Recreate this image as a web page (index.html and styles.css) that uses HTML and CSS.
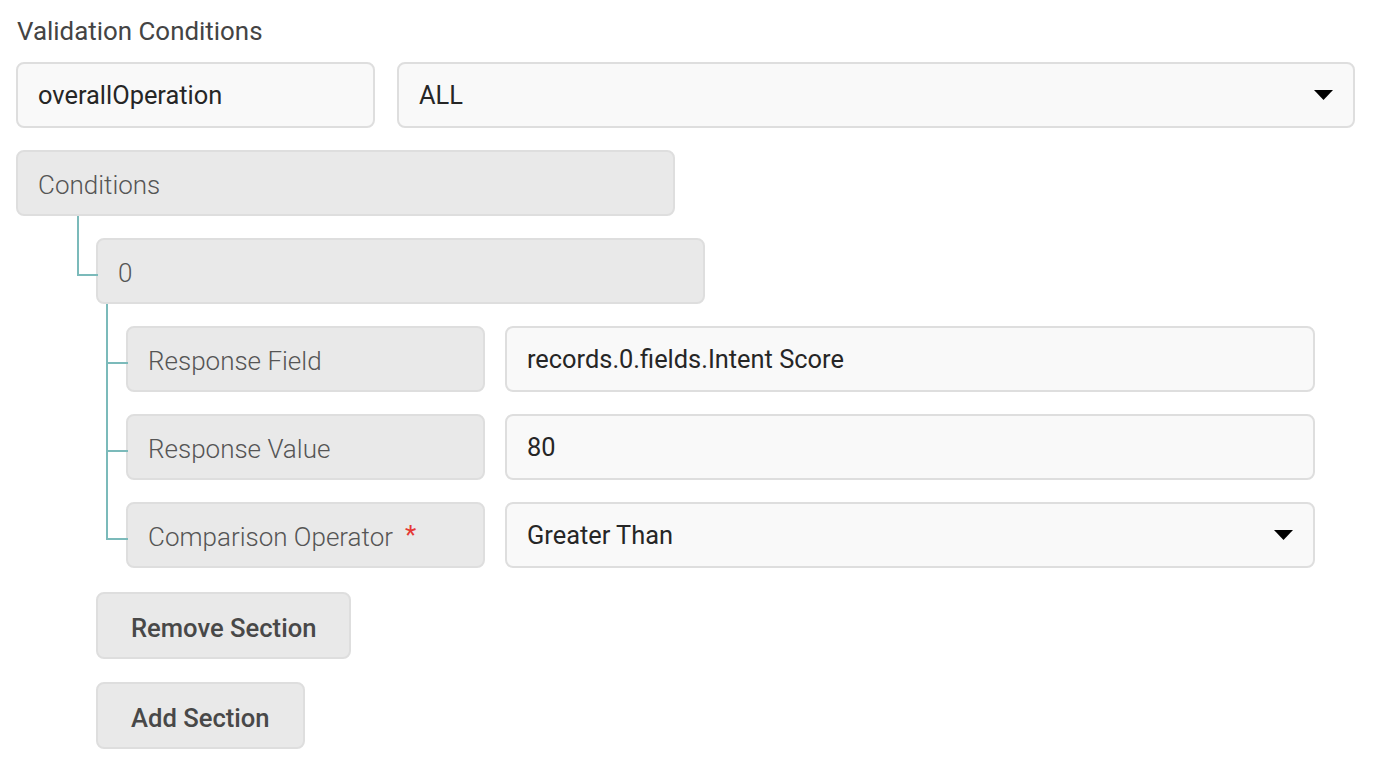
FILE: index.html
```html
<!DOCTYPE html>
<html>
<head>
<meta charset="utf-8">
<link rel="stylesheet" href="styles.css">
</head>
<body>
<div class="page">
  <div class="title">Validation Conditions</div>
  <div class="row">
    <div class="box input key-wide">overallOperation</div>
    <div class="box input select fill">ALL<svg class="caret" viewBox="0 0 19 10" width="19" height="10"><polygon points="0,0 19,0 9.5,10" fill="#000"/></svg></div>
  </div>
  <div class="group">
    <div class="box header w-cond">Conditions</div>
    <div class="children lvl1">
      <div class="node">
        <div class="box header w-zero">0</div>
        <div class="children lvl2">
          <div class="row branch">
            <div class="box header label">Response Field</div>
            <div class="box input value">records.0.fields.Intent Score</div>
          </div>
          <div class="row branch">
            <div class="box header label">Response Value</div>
            <div class="box input value">80</div>
          </div>
          <div class="row branch">
            <div class="box header label">Comparison Operator<span class="req">*</span></div>
            <div class="box input value select">Greater Than<svg class="caret" viewBox="0 0 19 10" width="19" height="10"><polygon points="0,0 19,0 9.5,10" fill="#000"/></svg></div>
          </div>
        </div>
      </div>
      <div class="actions">
        <button class="btn">Remove Section</button>
        <button class="btn">Add Section</button>
      </div>
    </div>
  </div>
</div>
</body>
</html>
```

FILE: styles.css
```css
* { box-sizing: border-box; }
html, body { margin: 0; padding: 0; background: #fff; }
body {
  font-family: Roboto, "Liberation Sans", sans-serif;
  font-size: 25.4px;
  color: #222;
}
.page {
  padding: 16px 0 0 16px;
  width: 1380px;
}
.title {
  color: #444;
  font-size: 25.9px;
  line-height: 30px;
  margin-bottom: 16px;
  padding-left: 1px;
}
.row {
  display: flex;
  gap: 22px;
  margin-bottom: 22px;
}
.box {
  height: 66px;
  border: 2px solid #dedede;
  border-radius: 8px;
  display: flex;
  align-items: center;
  padding: 0 20px;
  white-space: nowrap;
}
.input {
  background: #f9f9f9;
  color: #262626;
}
.header {
  background: #e9e9e9;
  color: #555;
  font-weight: 300;
  font-size: 26px;
  padding-top: 4px;
}
.key-wide { width: 359px; }
.fill { width: 958px; }
.select { justify-content: space-between; padding-right: 20px; }
.caret { display: block; }
.w-cond { width: 659px; margin-bottom: 22px; }
.w-zero { width: 609px; margin-bottom: 22px; }
.children { position: relative; }
.lvl1 { margin-left: 80px; }
.lvl2 { margin-left: 30px; }
.node { position: relative; }
.node::before {
  content: "";
  position: absolute;
  left: -19px;
  top: -22px;
  width: 19px;
  height: 58px;
  border-left: 2px solid #7bbaba;
  border-bottom: 2px solid #7bbaba;
}
.branch { position: relative; gap: 20px; }
.branch::before {
  content: "";
  position: absolute;
  left: -20px;
  top: -22px;
  width: 20px;
  height: 58px;
  border-left: 2px solid #7bbaba;
  border-bottom: 2px solid #7bbaba;
}
.branch + .branch::before {
  top: -54px;
  height: 90px;
}
.label { width: 359px; }
.value { width: 810px; }
.req {
  color: #e53935;
  margin-left: 12px;
  font-weight: 400;
  position: relative;
  top: -2px;
}
.actions {
  display: flex;
  flex-direction: column;
  align-items: flex-start;
  gap: 23px;
  padding-top: 2px;
}
.btn {
  font-family: Roboto, "Liberation Sans", sans-serif;
  font-size: 25.6px;
  font-weight: 500;
  color: #484848;
  background: #e9e9e9;
  border: 2px solid #dedede;
  border-radius: 8px;
  height: 67px;
  padding: 4px 33px 0;
}
```
